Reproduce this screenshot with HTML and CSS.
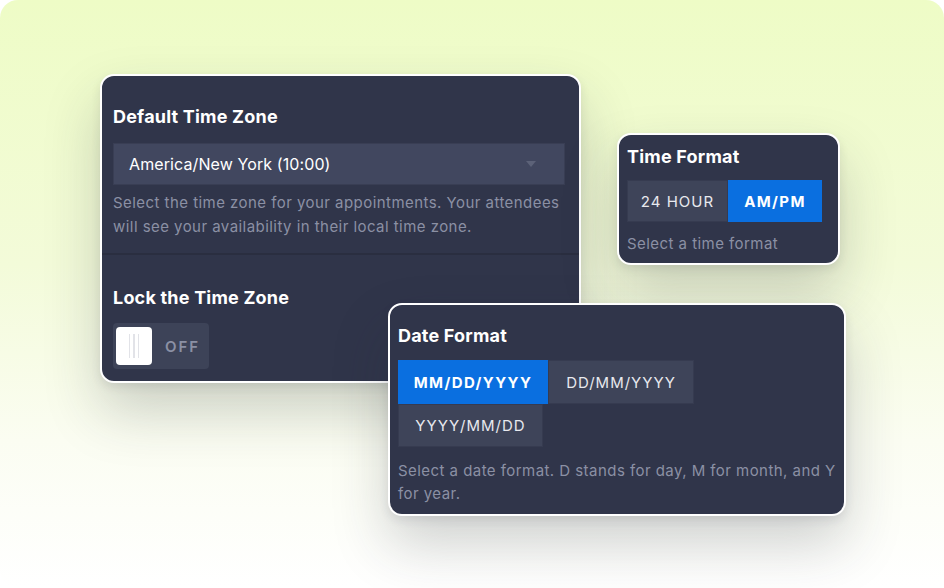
FILE: index.html
```html
<!DOCTYPE html>
<html lang="en">
<head>
<meta charset="utf-8">
<title>Time settings</title>
<link rel="stylesheet" href="styles.css">
</head>
<body>
<div class="stage">
  <section class="card card-zone">
    <div class="zone-section">
      <h2 class="card-title">Default Time Zone</h2>
      <div class="select">
        <span>America/New York (10:00)</span>
        <svg class="caret" width="12" height="8" viewBox="0 0 12 8"><path d="M1 1h10L6 7z" fill="#5c6278"/></svg>
      </div>
      <p class="hint">Select the time zone for your appointments. Your attendees will see your availability in their local time zone.</p>
    </div>
    <div class="lock-section">
      <h2 class="card-title">Lock the Time Zone</h2>
      <div class="toggle">
        <span class="knob"><i></i><i></i><i></i></span>
        <span class="toggle-label">OFF</span>
      </div>
    </div>
  </section>

  <section class="card card-time">
    <h2 class="card-title">Time Format</h2>
    <div class="seg">
      <span class="opt">24 HOUR</span>
      <span class="opt active">AM/PM</span>
    </div>
    <p class="hint">Select a time format</p>
  </section>

  <section class="card card-date">
    <h2 class="card-title">Date Format</h2>
    <div class="seg wrap">
      <span class="opt active">MM/DD/YYYY</span>
      <span class="opt">DD/MM/YYYY</span>
      <span class="opt">YYYY/MM/DD</span>
    </div>
    <p class="hint">Select a date format. D stands for day, M for month, and Y for year.</p>
  </section>
</div>
</body>
</html>
```

FILE: styles.css
```css
* { box-sizing: border-box; }
html, body { margin: 0; padding: 0; background: #ffffff; }
body {
  width: 944px;
  height: 588px;
  overflow: hidden;
  font-family: "Inter", "Noto Sans", sans-serif;
}
.stage {
  position: relative;
  width: 944px;
  height: 588px;
  border-radius: 18px;
  background: linear-gradient(180deg, #eefcc6 0%, #f3fbd9 45%, #fbfdf2 75%, #ffffff 100%);
  overflow: hidden;
}
.card {
  position: absolute;
  background: #30354a;
  border: 2px solid #ffffff;
  border-radius: 14px;
  color: #ffffff;
  box-shadow: 0 28px 56px rgba(40, 44, 60, 0.22), 0 4px 10px rgba(40, 44, 60, 0.10);
}
.card-title {
  margin: 0;
  font-size: 18px;
  line-height: 22px;
  font-weight: 700;
  letter-spacing: 0.2px;
  color: #ffffff;
}
.hint {
  margin: 0;
  font-size: 15px;
  line-height: 24px;
  letter-spacing: 0.45px;
  color: #8b90a4;
}

/* Zone card */
.card-zone {
  left: 100px;
  top: 74px;
  width: 481px;
  height: 309px;
}
.zone-section {
  padding: 30px 14px 14px 11px;
  border-bottom: 2px solid #2a2e40;
}
.zone-section .card-title { margin-bottom: 15px; }
.select {
  display: flex;
  align-items: center;
  justify-content: space-between;
  height: 42px;
  padding: 0 27px 0 15px;
  background: #41475f;
  border: 1px solid #393e54;
  font-size: 16px;
  letter-spacing: 0.1px;
  color: #ffffff;
  margin-bottom: 6px;
}
.lock-section {
  padding: 32px 11px;
}
.lock-section .card-title { margin-bottom: 14px; }
.toggle {
  display: flex;
  align-items: center;
  width: 96px;
  height: 46px;
  padding: 4px 3px;
  background: #3d4358;
  border-radius: 4px;
}
.knob {
  display: flex;
  justify-content: center;
  gap: 3px;
  width: 36px;
  height: 38px;
  background: #ffffff;
  border-radius: 4px;
  padding: 7px 0;
}
.knob i {
  display: block;
  width: 1.5px;
  background: #e2e3e8;
}
.toggle-label {
  margin-left: 13px;
  font-size: 15px;
  font-weight: 600;
  letter-spacing: 2px;
  color: #8b90a4;
}

/* Segmented buttons */
.seg {
  display: flex;
}
.seg.wrap { flex-wrap: wrap; width: 300px; }
.opt {
  display: flex;
  align-items: center;
  justify-content: center;
  height: 42px;
  padding: 0;
  background: #3e4459;
  border: 1px solid #363b50;
  font-size: 15px;
  letter-spacing: 1px;
  color: #e8e9ee;
}
.opt.active {
  background: #0a6fe0;
  border-color: #0a6fe0;
  font-weight: 700;
  letter-spacing: 1.4px;
  color: #ffffff;
}

/* Time card */
.card-time {
  left: 617px;
  top: 133px;
  width: 223px;
  height: 132px;
  padding: 11px 8px 0 8px;
}
.card-time .card-title { margin-bottom: 12px; }
.card-time .opt { width: 101px; }
.card-time .opt.active { width: 94px; }
.card-time .hint { margin-top: 10px; }

/* Date card */
.card-date {
  left: 388px;
  top: 303px;
  width: 458px;
  height: 213px;
  padding: 20px 8px 0 8px;
}
.card-date .card-title { margin-bottom: 13px; }
.card-date .opt { height: 44px; }
.card-date .opt:nth-child(3) { height: 43px; }
.card-date .opt:nth-child(1) { width: 150px; }
.card-date .opt:nth-child(2) { width: 146px; }
.card-date .opt:nth-child(3) { width: 145px; }
.card-date .hint { margin-top: 12px; line-height: 23px; }
```
